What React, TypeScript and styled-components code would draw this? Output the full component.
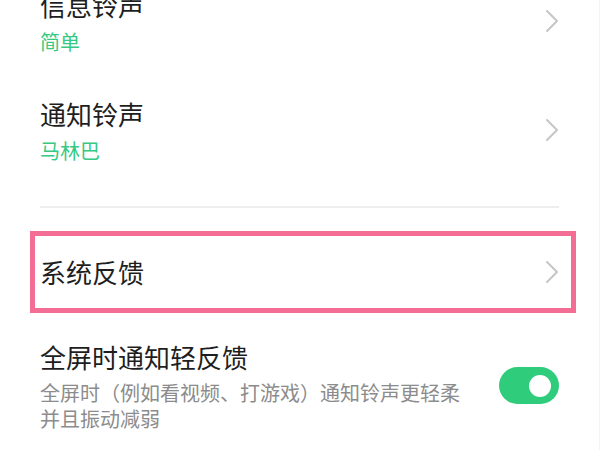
import styled, { createGlobalStyle } from "styled-components";

const GlobalStyle = createGlobalStyle`
  html, body {
    margin: 0;
    padding: 0;
    background: #ffffff;
  }
  body {
    font-family: "Noto Sans CJK SC", "Noto Sans", sans-serif;
  }
`;

const Screen = styled.div`
  width: 600px;
  height: 450px;
  overflow: hidden;
  box-sizing: border-box;
  border-right: 1px solid #f3f3f3;
  background: #ffffff;
`;

const List = styled.div`
  display: flex;
  flex-direction: column;
  margin-top: -33px;
  padding: 0 40px;
`;

const Row = styled.div`
  display: flex;
  align-items: center;
  gap: 16px;
  padding: 20px 0 21px;
`;

const HighlightRow = styled.div`
  display: flex;
  align-items: center;
  height: 72px;
  margin: 0 -17px 0 -10px;
  padding: 0 12px 0 5px;
  border: 5px solid #f36d94;
`;

const Texts = styled.div`
  flex: 1;
  display: flex;
  flex-direction: column;
  min-width: 0;
`;

const Title = styled.div`
  font-size: 26px;
  line-height: 36px;
  color: #1e1e1e;
`;

const Value = styled.div`
  margin-top: 6px;
  font-size: 20px;
  line-height: 26px;
  color: #36c982;
`;

const Description = styled.div`
  margin-top: 5px;
  max-width: 430px;
  font-size: 20px;
  line-height: 26px;
  color: #8c8c8c;
`;

const Divider = styled.div`
  height: 2px;
  background: #eeeeee;
  margin: 21px 0 23px;
`;

const SwitchTrack = styled.div<{ $on: boolean }>`
  flex: none;
  width: 60px;
  height: 37px;
  border-radius: 19px;
  box-sizing: border-box;
  padding: 0 8px;
  display: flex;
  align-items: center;
  justify-content: ${(p) => (p.$on ? "flex-end" : "flex-start")};
  background: ${(p) => (p.$on ? "#2ecc7b" : "#d9d9d9")};
`;

const SwitchKnob = styled.div`
  width: 22px;
  height: 22px;
  border-radius: 50%;
  background: #ffffff;
`;

const Spaced = styled.div`
  padding-top: 26px;
  display: flex;
  align-items: center;
  gap: 16px;
`;

function Chevron() {
  return (
    <svg width="14" height="24" viewBox="0 0 14 24" fill="none">
      <path d="M2 2 L12 12 L2 22" stroke="#c6c6c6" strokeWidth="2" strokeLinecap="round" strokeLinejoin="round" />
    </svg>
  );
}

const ringtones = [
  { title: "信息铃声", value: "简单" },
  { title: "通知铃声", value: "马林巴" },
];

export default function App() {
  return (
    <Screen>
      <GlobalStyle />
      <List>
        {ringtones.map((r) => (
          <Row key={r.title}>
            <Texts>
              <Title>{r.title}</Title>
              <Value>{r.value}</Value>
            </Texts>
            <Chevron />
          </Row>
        ))}
        <Divider />
        <HighlightRow>
          <Texts>
            <Title>系统反馈</Title>
          </Texts>
          <Chevron />
        </HighlightRow>
        <Spaced>
          <Texts>
            <Title>全屏时通知轻反馈</Title>
            <Description>全屏时（例如看视频、打游戏）通知铃声更轻柔并且振动减弱</Description>
          </Texts>
          <SwitchTrack $on>
            <SwitchKnob />
          </SwitchTrack>
        </Spaced>
      </List>
    </Screen>
  );
}
